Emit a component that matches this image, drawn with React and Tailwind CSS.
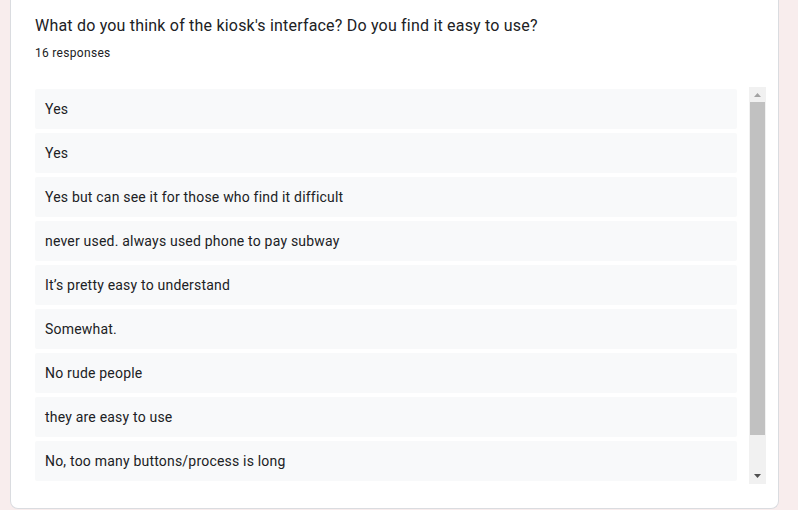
const answers = [
  'Yes',
  'Yes',
  'Yes but can see it for those who find it difficult',
  'never used. always used phone to pay subway',
  'It\u2019s pretty easy to understand',
  'Somewhat.',
  'No rude people',
  'they are easy to use',
  'No, too many buttons/process is long',
];

function Scrollbar() {
  return (
    <div className="w-[17px] shrink-0 bg-[#f1f1f1] flex flex-col">
      {/* up arrow */}
      <div className="h-[15px] flex items-center justify-center">
        <svg width="7" height="4" viewBox="0 0 7 4">
          <polygon points="3.5,0 7,4 0,4" fill="#a3a3a3" />
        </svg>
      </div>
      {/* thumb */}
      <div className="h-[333px] mx-[1px] bg-[#c1c1c1]" />
      <div className="flex-1" />
      {/* down arrow */}
      <div className="h-[17px] flex items-center justify-center">
        <svg width="7" height="4" viewBox="0 0 7 4">
          <polygon points="0,0 7,0 3.5,4" fill="#505050" />
        </svg>
      </div>
    </div>
  );
}

export default function App() {
  return (
    <div className="min-h-screen bg-[#f8eded] pb-px" style={{ fontFamily: 'Roboto, "Liberation Sans", sans-serif' }}>
      <div className="ml-[10px] mr-[19px] h-[509px] bg-white border border-t-0 border-[#dadce0] rounded-b-lg pl-[24px] pr-[12px] pt-[14px]">
        <h2 className="text-base leading-6 text-[#202124] tracking-[0.2px]">
          What do you think of the kiosk's interface? Do you find it easy to use?
        </h2>
        <div className="mt-[7px] text-xs leading-4 text-[#202124] tracking-[0.3px]">16 responses</div>

        <div className="mt-[26px] h-[397px] flex gap-[12px]">
          <div className="flex-1 pt-[2px] flex flex-col gap-[4px]">
            {answers.map((a, i) => (
              <div key={i} className="h-[40px] shrink-0 bg-[#f8f9fa] rounded-[2px] pl-[10px] flex items-center text-sm text-[#202124] tracking-[0.2px]">
                {a}
              </div>
            ))}
          </div>
          <Scrollbar />
        </div>
      </div>
    </div>
  );
}
